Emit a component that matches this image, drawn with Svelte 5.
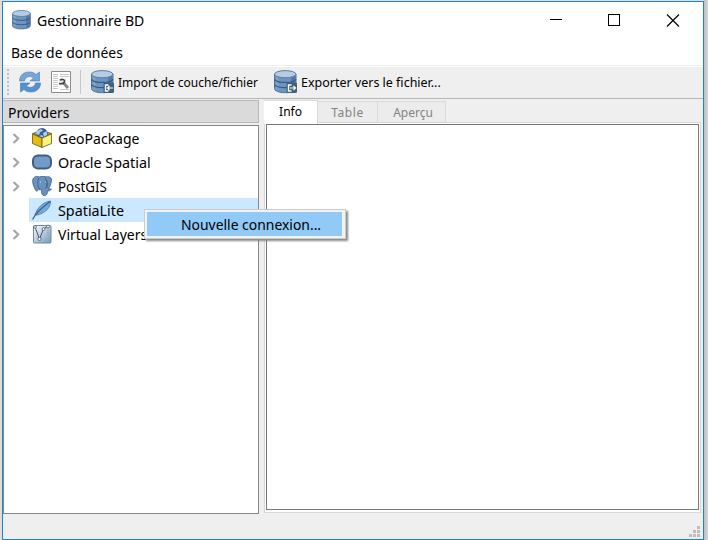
<script>
  const items = [
    { label: 'GeoPackage', icon: 'package', open: true, w: 'geo' },
    { label: 'Oracle Spatial', icon: 'oracle', open: true, w: 'ora' },
    { label: 'PostGIS', icon: 'postgis', open: true, w: 'post' },
    { label: 'SpatiaLite', icon: 'feather', open: false, w: 'lite' },
    { label: 'Virtual Layers', icon: 'virtual', open: true, w: 'virt' }
  ];
</script>

{#snippet database(mode)}
  <svg width="24" height="24" viewBox="0 0 24 24">
    <path d="M.500 4v14.500c0 2.500 4.500 4.200 11 4.200S22 21 22 18.500V4z" fill="#6b96c4" stroke="#56718d" />
    <path d="M17 5h4.500v15l-4.500 2z" fill="#527aa7" />
    <path d="M1.500 6v13l3 2V8z" fill="#7aa4d0" />
    <ellipse cx="11.250" cy="4.200" rx="10.700" ry="3.600" fill="#b5cce2" stroke="#5f7c9a" />
    <path d="M.500 9.300c2 4.200 19.500 4.200 21.500 0M.500 14.500c2 4.200 19.500 4.200 21.500 0" fill="none" stroke="#3d5a78" stroke-width="1.200" />
    {#if mode}
      <rect x="12.500" y="12.500" width="10.500" height="10.500" rx="1.500" fill="#426078" />
      <path d="M17.500 15h-3v6h3" fill="none" stroke="#fff" stroke-width="1.400" />
      {#if mode === 'in'}
        <path d="M22 18h-5.500m2-2-2 2 2 2" fill="none" stroke="#fff" stroke-width="1.200" />
      {:else}
        <path d="M16 18h5.500m-2-2 2 2-2 2" fill="none" stroke="#fff" stroke-width="1.200" />
      {/if}
    {/if}
  </svg>
{/snippet}

<div class="desktop">
  <main class="window">
    <header>
      <div class="app-icon">{@render database('')}</div>
      <span class="title">Gestionnaire BD</span>
      <svg class="controls" width="130" height="14" viewBox="0 0 130 14" fill="none" stroke="#000" shape-rendering="crispEdges">
        <path d="M0 6.500h12M58.500 1.500h11v11h-11z" />
        <path d="m117 1.500 12 12M129 1.500l-12 12" shape-rendering="auto" stroke-width="1.150" />
      </svg>
    </header>
    <nav><span>Base de données</span></nav>
    <div class="toolbar">
      <div class="grip"></div>
      <svg class="refresh" width="22" height="22" viewBox="0 0 22 22">
        <path d="M.500 10C.500 4 5 1 10 1c3 0 5 .7 7 2.500L20.500 1v9H11l3.500-3C11 4 6 6 5.500 10z" fill="#73a7da" stroke="#467db5" stroke-width=".6" />
        <path d="M21.500 12c0 6-4.500 9-9.500 9-3 0-5-.7-7-2.500L1.500 21v-9H11l-3.500 3c3.500 3 8.500 1 9-3z" fill="#5790cb" stroke="#4279b2" stroke-width=".6" />
      </svg>
      <svg class="settings" width="20" height="22" viewBox="0 0 20 22">
        <path d="M.500.500h19v21H.500z" fill="#fff" stroke="#8c8c8c" />
        <path d="M2 3.500h5M2 5.500h5M2 7.500h5M2 9.500h5M2 11.500h5M2 13.500h5M2 15.500h5M2 17.500h5M9 3.500h9M9 5.500h9M9 18.500h9" stroke="#c8c8c8" />
        <path d="M8 8h7v6H8z" fill="#e4e4e4" />
        <path d="m13 12.500 4 4.500" stroke="#888" stroke-width="3" />
        <path d="M9 9c3-1.500 5 0 4.500 1.500-.5 2-3 2.500-5.500 2" fill="none" stroke="#444" stroke-width="1.600" />
      </svg>
      <i class="separator"></i>
      <div class="tool import">{@render database('in')}<span>Import de couche/fichier</span></div>
      <div class="tool export">{@render database('out')}<span>Exporter vers le fichier...</span></div>
    </div>
    <div class="body">
      <aside>
        <h1><span>Providers</span></h1>
        <div class="tree">
          {#each items as item}
            <div class="row" class:selected={!item.open}>
              <div class="branch">
                {#if item.open}
                  <svg width="9" height="12" viewBox="0 0 9 12"><path d="m1.500 1 4.700 4.500-4.700 4.500" fill="none" stroke="#a6a6a6" stroke-width="2.200" /></svg>
                {/if}
              </div>
              <div class="entry">
                <svg width="20" height="20" viewBox="0 0 20 20">
                  {#if item.icon === 'package'}
                    <path d="m.500 5.500 9.500-3 9.500 3-9.500 5z" fill="#bd9c2a" stroke="#68551c" stroke-width=".8" />
                    <circle cx="10" cy="5.800" r="5.800" fill="#3c608a" />
                    <path d="m5 3 4-2 2 2-3 1-1 3-3-1zM11 5l4-2v4l-3 2zM7 8l3-1 2 3z" fill="#acd0f3" />
                    <path d="m.500 6 9.500 4v9.500l-9.500-4z" fill="#e4bc13" stroke="#68551c" stroke-width=".8" />
                    <path d="m19.500 6-9.500 4v9.500l9.500-4z" fill="#fff078" stroke="#655421" stroke-width=".8" />
                  {:else if item.icon === 'oracle'}
                    <rect x="1" y="3.500" width="18" height="13" rx="5" fill="#729bc9" stroke="#415d7b" stroke-width="2" />
                  {:else if item.icon === 'postgis'}
                    <path d="M1 3C3-.5 6 .5 8 1c3-1.500 5-.500 6 0 4-1 6 1 5.300 4-.5 4-1.800 6-3 8h3c-1 2-3 2-4 2 0 3-.5 4.500-3 4.500S9.500 17 9.500 13c-1 1-2 1-3 0-.5 2-2 3-3 1C1.500 10 0 6 1 3z" fill="#6893c1" stroke="#4b6b8c" />
                    <path d="M7 2c-2 3-1 6-1 9l2 2M13 2c2 2 3 5 2 8l-2 3M14 4c-1 4 1 4 1 8" fill="none" stroke="#3f5f80" stroke-width=".9" />
                    <path d="M8 6h1M13 6h1" stroke="#d6e6f5" />
                  {:else if item.icon === 'feather'}
                    <path d="M3 15C5 8 11 2 18.500 1c0 6-3 9-8 12-2 1-4 2-7 2z" fill="#78a9dd" stroke="#4876a7" stroke-width=".8" />
                    <path d="M.500 19.500C3 14 8 9 18 1.500" fill="none" stroke="#365e8d" stroke-width="1.200" />
                  {:else}
                    <defs><linearGradient id="sheet" x1="0" y1="0" x2="1" y2="1"><stop stop-color="#fff" /><stop offset="1" stop-color="#7497bb" /></linearGradient></defs>
                    <rect x="1.500" y="1.500" width="17.500" height="17.500" rx="1" fill="url(#sheet)" stroke="#72889d" />
                    <path d="m3 3 4.500 12 4-10 4.500-3" fill="none" stroke="#40576d" />
                    <path d="M16 2v10" stroke="#8197ad" stroke-dasharray="1 1" />
                    <g fill="#fff" stroke="#465d73" stroke-width=".8"><circle cx="3" cy="3" r="1.400" /><circle cx="7.500" cy="15" r="1.600" /><circle cx="11.500" cy="5" r="1.400" /><circle cx="16" cy="2.500" r="1.400" /></g>
                  {/if}
                </svg>
                <span class={item.w}>{item.label}</span>
              </div>
            </div>
          {/each}
        </div>
      </aside>
      <section>
        <div class="tabs"><div class="active"><span>Info</span></div><div class="table"><span>Table</span></div><div class="preview"><span>Aperçu</span></div></div>
        <div class="pane"><div class="content"></div></div>
      </section>
    </div>
    <footer>
      <svg width="11" height="12" viewBox="0 0 11 12" fill="#bebebe"><path d="M8 0h3v3H8zM4 4h3v3H4zM8 4h3v3H8zM0 8h3v3H0zM4 8h3v3H4zM8 8h3v3H8z" /></svg>
    </footer>
  </main>
  <div class="menu"><div><span>Nouvelle connexion...</span></div></div>
</div>

<style>
  * { box-sizing: border-box; }
  .desktop { position: relative; width: 708px; height: 540px; overflow: hidden; padding: 1px 4px 0 2px; background: linear-gradient(90deg, #dedede 0 2px, transparent 2px 704px, #bebebe 704px, #d7d7d7), #dfdfdf; font: 15px "Noto Sans", "Open Sans", sans-serif; color: #000; }
  .window { width: 702px; height: 539px; display: flex; flex-direction: column; border: 1px solid #1e82cf; background: #efefef; }
  svg { display: block; flex: none; }
  span { display: block; white-space: nowrap; transform-origin: left center; }
  header { height: 36px; flex: none; display: flex; align-items: center; background: #fff; padding: 0 23px 0 9px; }
  .app-icon { width: 20px; height: 20px; margin-right: 5px; }
  .app-icon :global(svg) { width: 20px; height: 20px; }
  .title { font-size: 15px; transform: scaleX(.936); }
  .controls { margin-left: auto; }
  nav { height: 28px; flex: none; display: flex; align-items: center; padding: 0 8px; background: #fff; border-bottom: 1px solid #ececec; }
  nav span { transform: scaleX(.93); }
  .toolbar { height: 33px; flex: none; border-top: 1px solid #fff; border-bottom: 1px solid #b5b5b5; display: flex; align-items: center; padding: 0 0 1px 4px; font-size: 13px; }
  .grip { width: 2px; height: 26px; background: repeating-linear-gradient(#bdbdbd 0 2px, transparent 2px 4px); margin-right: 10px; }
  .settings { margin-left: 10px; }
  .separator { width: 1px; height: 24px; background: #c7c7c7; margin: 0 10px 0 9px; }
  .tool { display: flex; align-items: center; gap: 3px; width: 183px; }
  .import span { transform: scaleX(.925); }
  .export span { transform: scaleX(.96); }
  .body { height: 416px; flex: none; display: flex; }
  aside { width: 256px; padding-top: 1px; }
  h1 { margin: 0 0 2px; height: 23px; font: inherit; display: flex; align-items: center; border: 1px solid #b7b7b7; border-left: 0; background: #dadada; padding-left: 5px; }
  h1 span { transform: scaleX(.925); }
  .tree { height: 389px; border: 1px solid #828790; background: #fff; }
  .row { display: flex; height: 24px; }
  .branch { width: 25px; padding: 7px 0 0 8px; }
  .entry { flex: 1; display: flex; align-items: center; gap: 6px; padding-left: 3px; }
  .selected .entry { background: #cce8ff; }
  .geo { transform: scaleX(.934); }
  .ora { transform: scaleX(.956); }
  .post { transform: scaleX(.89); }
  .lite { transform: scaleX(.955); }
  .virt { transform: scaleX(.932); }
  section { width: 437px; margin-left: 5px; padding-top: 1px; }
  .tabs { display: flex; align-items: flex-end; height: 22px; font-size: 12px; color: #838383; }
  .tabs > div { height: 22px; display: flex; align-items: center; justify-content: center; border: 1px solid #d9d9d9; border-left: 0; border-bottom: 0; background: #ececec; }
  .tabs .active { width: 54px; height: 24px; background: #fff; color: #000; z-index: 1; align-self: flex-start; flex: none; }
  .tabs .active span { transform: translateY(-1px); }
  .tabs .table { width: 60px; height: 21px; letter-spacing: .55px; }
  .tabs .preview { width: 68px; height: 21px; padding-left: 3px; }
  .pane { height: 391px; border: 1px solid #d9d9d9; background: #fff; padding: 1px; }
  .content { height: 386px; border: 1px solid #777; }
  footer { flex: 1; display: flex; justify-content: flex-end; padding: 11px 3px 0; }
  .menu { position: absolute; left: 144px; top: 209px; width: 202px; height: 30px; border: 1px solid #ccc; background: #f2f2f2; padding: 2px; box-shadow: 2px 2px 2px #888; }
  .menu > div { width: 195px; height: 24px; background: #91c9f7; display: flex; align-items: center; padding-left: 34px; }
  .menu span { transform: scaleX(.927); }
</style>
